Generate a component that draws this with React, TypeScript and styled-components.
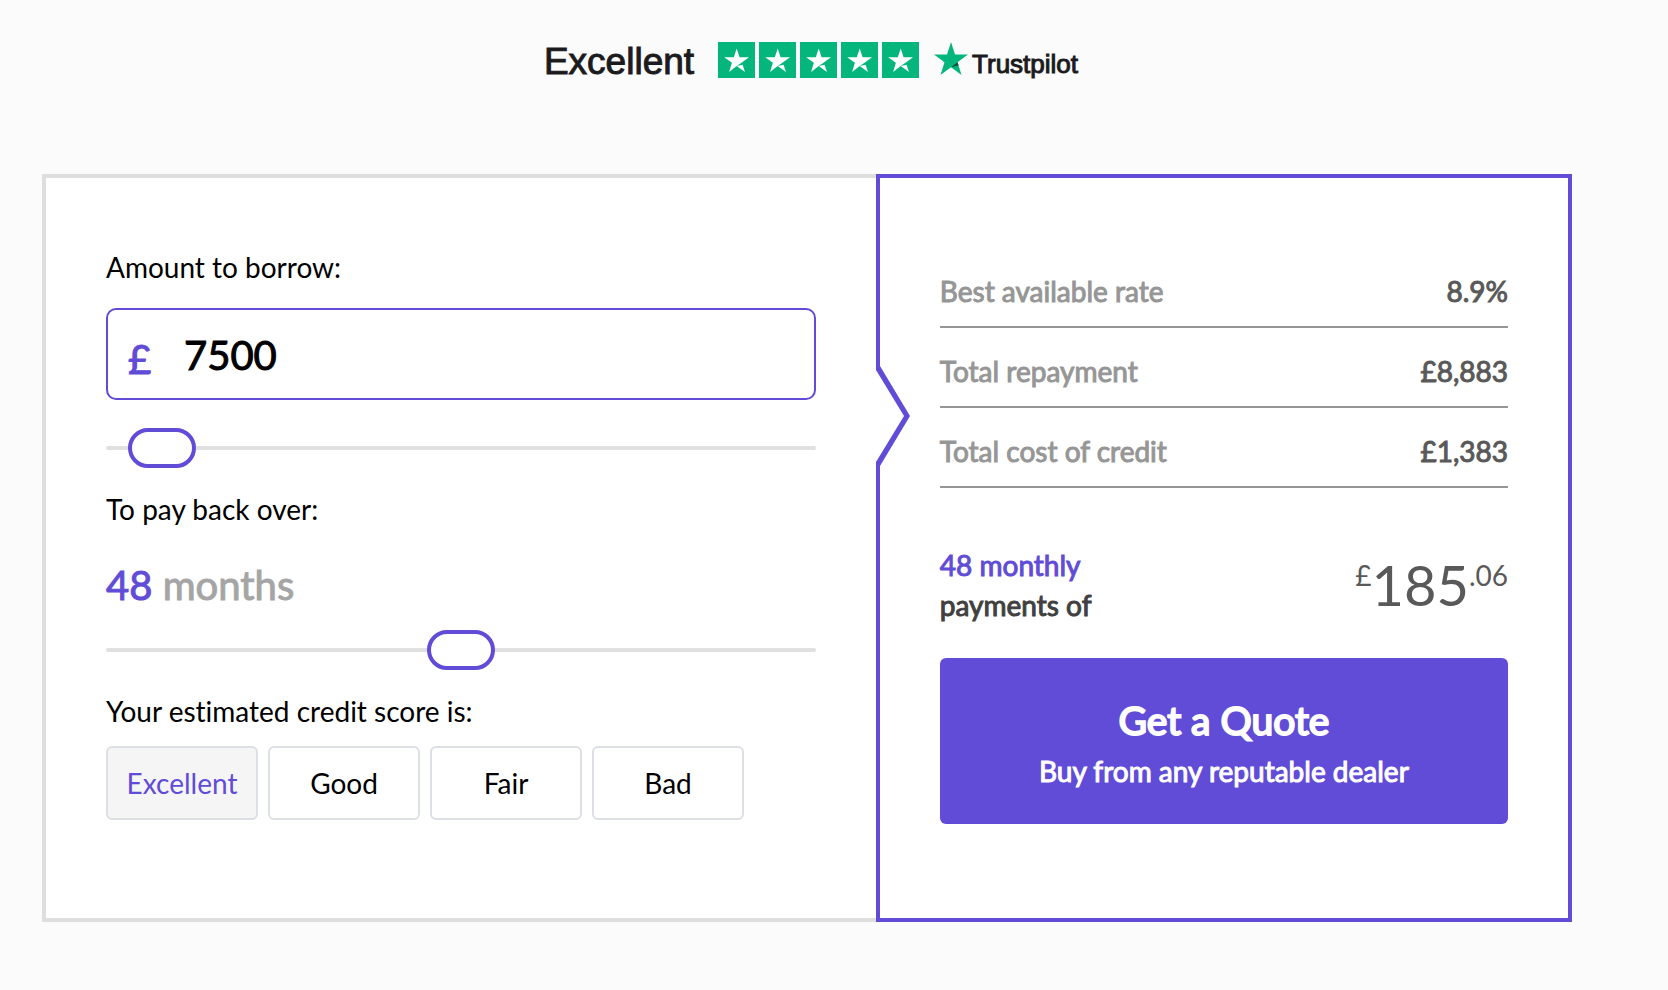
import React, { useState } from 'react';
import styled, { createGlobalStyle } from 'styled-components';

const purple = '#614cd7';

const GlobalStyle = createGlobalStyle`
  *, *::before, *::after { box-sizing: border-box; }
  body {
    margin: 0;
    background: #fbfbfb;
    color: #000;
    font-family: Lato, 'Liberation Sans', sans-serif;
    font-size: 28px;
    font-variant-ligatures: none;
    line-height: 40px;
  }
`;

const Page = styled.main`
  padding: 40px 96px 68px 42px;
`;

const Rating = styled.header`
  display: flex;
  justify-content: center;
  align-items: center;
  height: 40px;
  margin-bottom: 94px;
  padding-left: 8px;
  color: #1b1b1d;
  font-family: 'Liberation Sans', sans-serif;
  -webkit-text-stroke: 1px currentColor;
`;

const Verdict = styled.span`
  margin-right: 24px;
  padding-top: 4px;
  font-size: 37px;
`;

const Stars = styled.span`
  display: flex;
  gap: 4px;
  margin-right: 15px;
`;

const StarTile = styled.svg`
  display: block;
  width: 37px;
  height: 36px;
`;

const Brand = styled.a`
  display: flex;
  align-items: center;
  gap: 4px;
  color: inherit;
  font-size: 26px;
  text-decoration: none;
`;

const BrandName = styled.span`
  padding-top: 8px;
`;

const Calculator = styled.form`
  display: grid;
  grid-template-columns: minmax(0, 109fr) minmax(0, 91fr);
`;

const Inputs = styled.section`
  padding: 69px 60px 98px;
  background: #fff;
  border: 4px solid #dedede;
  border-right: 0;
`;

const Summary = styled.section`
  position: relative;
  padding: 70px 60px 94px;
  background: #fff;
  border: 4px solid ${purple};
`;

const Notch = styled.svg`
  position: absolute;
  top: 188px;
  left: -4px;
`;

const Label = styled.label`
  display: block;
`;

const AmountBox = styled.div`
  display: flex;
  align-items: center;
  height: 92px;
  margin: 21px 0 28px;
  padding: 2px 20px 0;
  border: 2px solid ${purple};
  border-radius: 10px;
  font-size: 40px;
  line-height: 48px;
  -webkit-text-stroke: 1px currentColor;
`;

const Currency = styled.span`
  width: 56px;
  padding-top: 8px;
  color: ${purple};
`;

const AmountInput = styled.input`
  flex: 1;
  min-width: 0;
  padding: 0;
  border: 0;
  outline: 0;
  background: transparent;
  color: #000;
  font: inherit;
`;

const Slider = styled.input`
  display: block;
  width: 100%;
  height: 40px;
  margin: 0 0 21px;
  appearance: none;
  background: transparent;

  &::-webkit-slider-runnable-track {
    height: 4px;
    border-radius: 2px;
    background: #e0e0e0;
  }
  &::-webkit-slider-thumb {
    appearance: none;
    width: 68px;
    height: 40px;
    margin-top: -18px;
    border: 4px solid ${purple};
    border-radius: 20px;
    background: #fff;
  }
`;

const Term = styled.output`
  display: block;
  margin: 32px 0 21px;
  color: #a5a5a5;
  font-size: 40px;
  line-height: 48px;
  -webkit-text-stroke: 1px currentColor;
`;

const TermCount = styled.span`
  color: ${purple};
`;

const ScoreGroup = styled.div`
  display: flex;
  gap: 10px;
  margin-top: 15px;
`;

const ScoreButton = styled.button<{ $active: boolean }>`
  width: 152px;
  height: 74px;
  padding: 0;
  border: 2px solid #dce0e5;
  border-radius: 6px;
  background: ${(p) => (p.$active ? '#f5f5f5' : '#fff')};
  color: ${(p) => (p.$active ? purple : '#000')};
  font: inherit;
`;

const Figures = styled.table`
  width: 100%;
  border-collapse: separate;
  border-spacing: 0;
`;

const FigureName = styled.th`
  padding: 23px 0 15px;
  border-bottom: 2px solid #969696;
  color: #969696;
  font-weight: 400;
  text-align: left;
  -webkit-text-stroke: 1px currentColor;
`;

const FigureValue = styled.td`
  padding: 23px 0 15px;
  border-bottom: 2px solid #969696;
  color: #595959;
  text-align: right;
  -webkit-text-stroke: 1px currentColor;
`;

const Monthly = styled.div`
  display: flex;
  justify-content: space-between;
  align-items: center;
  margin: 57px 0 33px;
`;

const Schedule = styled.p`
  margin: 0;
  color: #404040;
  -webkit-text-stroke: 1px currentColor;
`;

const ScheduleTerm = styled.span`
  display: block;
  color: ${purple};
`;

const Price = styled.p`
  display: flex;
  align-items: flex-start;
  margin: 0;
  color: #595959;
  font-size: 56px;
  line-height: 56px;
`;

const PriceSmall = styled.span`
  padding-top: 4px;
  font-size: 28px;
  line-height: 28px;
`;

const QuoteButton = styled.button`
  display: flex;
  flex-direction: column;
  align-items: center;
  gap: 7px;
  width: 100%;
  padding: 38px 20px 33px;
  border: 0;
  border-radius: 6px;
  background: ${purple};
  color: #fff;
  font: inherit;
`;

const QuoteTitle = styled.span`
  font-size: 39px;
  line-height: 48px;
  -webkit-text-stroke: 2px currentColor;
`;

const QuoteNote = styled.span`
  -webkit-text-stroke: 1px currentColor;
`;

const STAR = 'M17 0 L21 12.6 H34 L23.5 20.3 L27.5 33 L17 25.2 L6.5 33 L10.5 20.3 L0 12.6 H13 Z';

function RatingStar() {
  return (
    <StarTile viewBox="0 0 37 36" aria-hidden="true">
      <rect width="37" height="36" fill="#04b67b" />
      <path
        d="M18.7 6.5 L21.6 15.2 H31 L23.5 20.7 L18.7 24.1 L11.1 30 L13.9 20.7 L6.2 15.2 H15.8 Z M18.7 24.1 L24.6 22.7 L27 30 Z"
        fill="#fff"
      />
    </StarTile>
  );
}

const scores = ['Excellent', 'Good', 'Fair', 'Bad'];

const figures = [
  ['Best available rate', '8.9%'],
  ['Total repayment', '£8,883'],
  ['Total cost of credit', '£1,383'],
];

export default function App() {
  const [amount, setAmount] = useState('7500');
  const [months, setMonths] = useState(48);
  const [score, setScore] = useState('Excellent');

  return (
    <Page>
      <GlobalStyle />
      <Rating>
        <Verdict>Excellent</Verdict>
        <Stars role="img" aria-label="5 out of 5 stars">
          {[1, 2, 3, 4, 5].map((n) => (
            <RatingStar key={n} />
          ))}
        </Stars>
        <Brand href="#reviews">
          <svg width="34" height="36" viewBox="0 0 34 36" aria-hidden="true">
            <path d={STAR} fill="#04b67b" />
            <path d="M24.5 23.4 L23.5 20.3 L17 25.2 Z" fill="#075139" />
          </svg>
          <BrandName>Trustpilot</BrandName>
        </Brand>
      </Rating>

      <Calculator onSubmit={(e) => e.preventDefault()}>
        <Inputs>
          <Label htmlFor="amount">Amount to borrow:</Label>
          <AmountBox>
            <Currency>£</Currency>
            <AmountInput
              id="amount"
              inputMode="numeric"
              value={amount}
              onChange={(e) => setAmount(e.target.value)}
            />
          </AmountBox>
          <Slider
            type="range"
            aria-label="Amount to borrow"
            min={2000}
            max={160000}
            step={500}
            value={Number(amount) || 2000}
            onChange={(e) => setAmount(e.target.value)}
          />

          <Label htmlFor="months">To pay back over:</Label>
          <Term htmlFor="months">
            <TermCount>{months}</TermCount> months
          </Term>
          <Slider
            id="months"
            type="range"
            min={12}
            max={84}
            value={months}
            onChange={(e) => setMonths(Number(e.target.value))}
          />

          <Label as="div" id="score-label">Your estimated credit score is:</Label>
          <ScoreGroup role="group" aria-labelledby="score-label">
            {scores.map((s) => (
              <ScoreButton
                key={s}
                type="button"
                $active={s === score}
                aria-pressed={s === score}
                onClick={() => setScore(s)}
              >
                {s}
              </ScoreButton>
            ))}
          </ScoreGroup>
        </Inputs>

        <Summary>
          <Notch width="34" height="100" viewBox="0 0 34 100" aria-hidden="true">
            <path d="M0 0 H4 L28 50 L4 100 H0 Z" fill="#fff" />
            <path d="M0 0 H4 L34 50 L4 100 H0 V96 L28 50 L0 4 Z" fill={purple} />
          </Notch>
          <Figures>
            <tbody>
              {figures.map(([name, value]) => (
                <tr key={name}>
                  <FigureName scope="row">{name}</FigureName>
                  <FigureValue>{value}</FigureValue>
                </tr>
              ))}
            </tbody>
          </Figures>
          <Monthly>
            <Schedule>
              <ScheduleTerm>{months} monthly</ScheduleTerm>
              payments of
            </Schedule>
            <Price>
              <PriceSmall>£</PriceSmall>185<PriceSmall>.06</PriceSmall>
            </Price>
          </Monthly>
          <QuoteButton type="submit">
            <QuoteTitle>Get a Quote</QuoteTitle>
            <QuoteNote>Buy from any reputable dealer</QuoteNote>
          </QuoteButton>
        </Summary>
      </Calculator>
    </Page>
  );
}
